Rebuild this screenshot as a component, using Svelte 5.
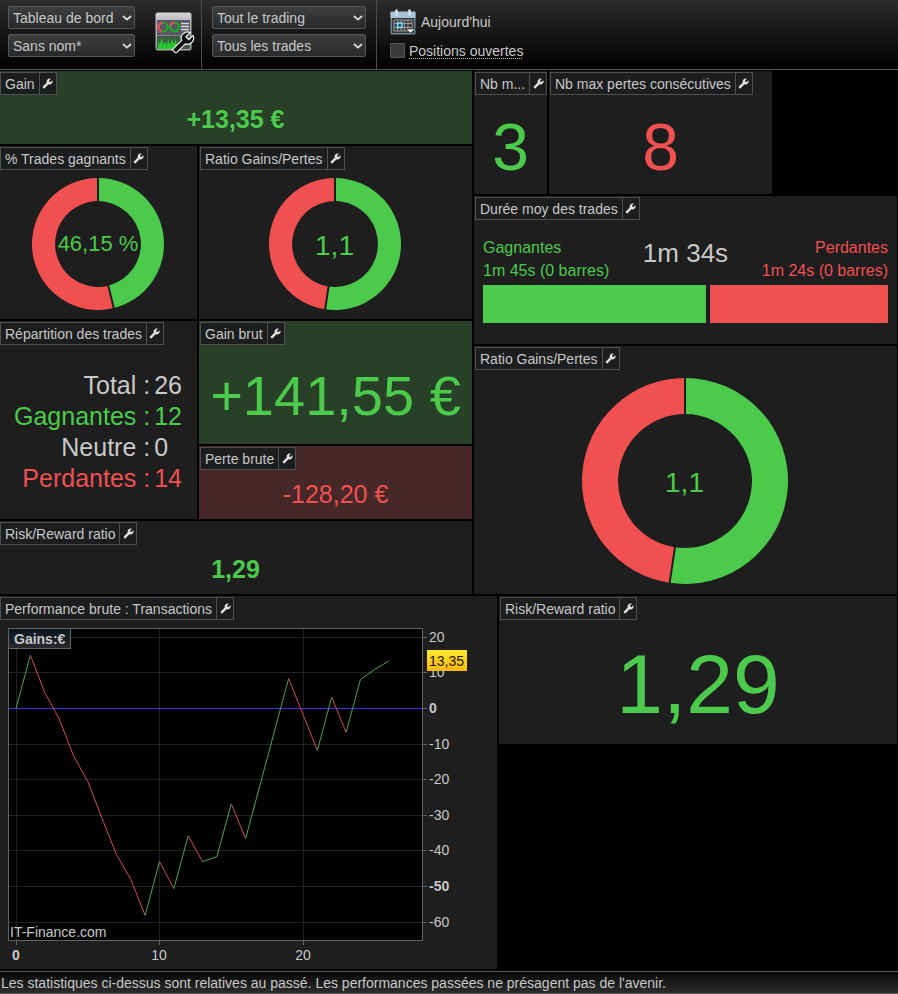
<script lang="ts">
	const X_STEP = 14.35;
	const X_ZERO = 17;
	const Y_ZERO = 88.5;
	const Y_UNIT = 3.56;

	let openPositions = $state(false);

	const trades = [
		0, 15, 4.5, -2.8, -13.2, -20.5, -30.9, -41, -48, -58.1, -43, -50.6, -35.8, -43, -41.6, -26.8,
		-36.5, -21.6, -6.5, 8.4, -1.7, -11.8, 3.2, -6.7, 8.1, 11, 13.35
	];
	const yTicks = [20, 10, 0, -10, -20, -30, -40, -50, -60];
	const xTicks = [0, 10, 20];

	const x = (i: number) => X_ZERO + i * X_STEP;
	const y = (v: number) => Y_ZERO - v * Y_UNIT;
	const gridY = (v: number) => Math.floor(y(v)) + 0.5;
	const gridX = (i: number) => Math.floor(x(i)) + 0.5;

	let segments = $derived(
		trades.slice(1).map((v, i) => ({
			x1: x(i),
			y1: y(trades[i]),
			x2: x(i + 1),
			y2: y(v),
			up: v >= trades[i]
		}))
	);

	const breakdown = [
		{ label: 'Total', value: 26, tone: '' },
		{ label: 'Gagnantes', value: 12, tone: 'win' },
		{ label: 'Neutre', value: 0, tone: '' },
		{ label: 'Perdantes', value: 14, tone: 'loss' }
	];

	const durations = { win: 105, loss: 84 };

	function polar(part: number, r: number) {
		const a = part * 2 * Math.PI;
		return `${100 + r * Math.sin(a)} ${100 - r * Math.cos(a)}`;
	}

	function slice(from: number, to: number) {
		const large = to - from > 0.5 ? 1 : 0;
		return `M${polar(from, 100)}A100 100 0 ${large} 1 ${polar(to, 100)}L${polar(to, 65)}A65 65 0 ${large} 0 ${polar(from, 65)}Z`;
	}
</script>

{#snippet wrench()}
	<svg class="wrench" viewBox="0 0 24 24" aria-hidden="true">
		<path
			transform="matrix(-1 0 0 1 24 0)"
			d="M22.7 19l-9.1-9.1c.9-2.3.4-5-1.5-6.9-2-2-5-2.4-7.4-1.3L9 6 6 9 1.6 4.7C.4 7.1.9 10.1 2.9 12.1c1.9 1.9 4.6 2.4 6.9 1.5l9.1 9.1c.4.4 1 .4 1.4 0l2.3-2.3c.5-.4.5-1.1.1-1.4z"
		/>
	</svg>
{/snippet}

{#snippet tab(title: string)}
	<header class="tab">
		<h2>{title}</h2>
		<button type="button">{@render wrench()}</button>
	</header>
{/snippet}

{#snippet dropdown(id: string, text: string)}
	<div class="dropdown">
		<select {id}>
			<option>{text}</option>
		</select>
		<svg viewBox="0 0 10 6" aria-hidden="true"><path d="M1 1l4 3.6L9 1" /></svg>
	</div>
{/snippet}

{#snippet donut(part: number, text: string, size: string)}
	<div class="donut {size}">
		<svg viewBox="0 0 200 200" aria-hidden="true">
			<path class="win" d={slice(0, part)} />
			<path class="loss" d={slice(part, 1)} />
			<path class="split" d="M{polar(0, 63)}L{polar(0, 102)}M{polar(part, 63)}L{polar(part, 102)}" />
		</svg>
		<span>{text}</span>
	</div>
{/snippet}

<div class="toolbar">
	<div class="group">
		<div class="selects">
			{@render dropdown('view', 'Tableau de bord')}
			{@render dropdown('layout', 'Sans nom*')}
		</div>
		<button class="icon-button" type="button">
			<svg class="board-icon" viewBox="0 0 40 42" aria-hidden="true">
				<defs>
					<linearGradient id="board" x1="0" y1="0" x2="0" y2="1">
						<stop offset="0" stop-color="#d4d6da" />
						<stop offset="0.25" stop-color="#b4b6ba" />
						<stop offset="1" stop-color="#a4a6aa" />
					</linearGradient>
				</defs>
				<rect x="0.5" y="0.5" width="36" height="38" rx="2.5" fill="url(#board)" />
				<rect x="2" y="8" width="33" height="29" fill="#5a5668" />
				<rect x="2" y="23" width="33" height="14" fill="#3c5a46" />
				<circle cx="8" cy="15" r="4.4" fill="none" stroke="#18b020" stroke-width="2.2" />
				<path d="M8 10.6a4.4 4.4 0 0 0-1 8.7" fill="none" stroke="#f04858" stroke-width="2.2" />
				<circle cx="19.5" cy="15" r="4.4" fill="none" stroke="#18b020" stroke-width="2.2" />
				<path d="M19.5 10.6a4.4 4.4 0 0 0-4.2 3.2" fill="none" stroke="#f04858" stroke-width="2.2" />
				<path d="M26 11.5h8M26 14.5h8M26 17.5h8" stroke="#d8d8dc" stroke-width="1.5" />
				<path d="M2 23.5h24" stroke="#85858c" />
				<path
					d="M3 37v-7l2 2 2-7 1 8 2-4 2 5 1-8 2 7 2-6 2 5 2-6 1 11z"
					fill="#25c72c"
				/>
				<path
					transform="translate(39.5 19) scale(-.95 .95)"
					d="M22.7 19l-9.1-9.1c.9-2.3.4-5-1.5-6.9-2-2-5-2.4-7.4-1.3L9 6 6 9 1.6 4.7C.4 7.1.9 10.1 2.9 12.1c1.9 1.9 4.6 2.4 6.9 1.5l9.1 9.1c.4.4 1 .4 1.4 0l2.3-2.3c.5-.4.5-1.1.1-1.4z"
					fill="#0c0c0e"
					stroke="#f0f0f0"
					stroke-width="1.3"
				/>
			</svg>
		</button>
	</div>
	<div class="group wide">
		<div class="selects">
			{@render dropdown('account', 'Tout le trading')}
			{@render dropdown('filter', 'Tous les trades')}
		</div>
	</div>
	<div class="period">
		<button class="date-button" type="button">
			<svg viewBox="0 0 26 26" aria-hidden="true">
				<rect x="0.5" y="3" width="25" height="22.5" rx="1" fill="#75838f" />
				<rect x="0.5" y="2.5" width="25" height="6.5" rx="1" fill="#a9c2d8" />
				<rect x="2" y="9" width="22" height="15" fill="#343a42" />
				<path
					d="M4 11h18v11H4zM4 14.5h18M4 18.5h18M7.5 11v11M11 11v11M14.5 11v11M18 11v11"
					fill="none"
					stroke="#a49a94"
				/>
				<rect x="7.5" y="14" width="4.5" height="4.5" fill="#205870" stroke="#7fe4f4" stroke-width="1.5" />
				<path d="M6.5 1.5v4M19.5 1.5v4" stroke="#dce6ee" stroke-width="2.4" stroke-linecap="round" />
				<path d="M16 20h9l-4.5 4z" fill="#fff" stroke="#222" stroke-width="0.6" />
			</svg>
			Aujourd'hui
		</button>
		<div class="check">
			<input id="open-positions" type="checkbox" bind:checked={openPositions} />
			<label for="open-positions">Positions ouvertes</label>
		</div>
	</div>
</div>

<main>
	<section class="panel gain positive">
		{@render tab('Gain')}
		<p class="value bold win">+13,35 €</p>
	</section>

	<section class="panel max-wins">
		{@render tab('Nb m...')}
		<p class="value digit win">3</p>
	</section>

	<section class="panel max-losses">
		{@render tab('Nb max pertes consécutives')}
		<p class="value digit loss">8</p>
	</section>

	<section class="panel winners">
		{@render tab('% Trades gagnants')}
		{@render donut(12 / 26, '46,15 %', 'percent')}
	</section>

	<section class="panel ratio">
		{@render tab('Ratio Gains/Pertes')}
		{@render donut(1.1 / 2.1, '1,1', '')}
	</section>

	<section class="panel duration">
		{@render tab('Durée moy des trades')}
		<div class="duration-body">
			<div class="duration-text">
				<p class="win">Gagnantes<br />1m 45s (0 barres)</p>
				<strong>1m 34s</strong>
				<p class="loss">Perdantes<br />1m 24s (0 barres)</p>
			</div>
			<div class="bars">
				<div class="bar win" style="flex-grow:{durations.win}"></div>
				<div class="bar loss" style="flex-grow:{durations.loss}"></div>
			</div>
		</div>
	</section>

	<section class="panel breakdown">
		{@render tab('Répartition des trades')}
		<div class="value">
			<table>
				<tbody>
					{#each breakdown as row (row.label)}
						<tr class={row.tone}>
							<th scope="row">{row.label} :</th>
							<td>{row.value}</td>
						</tr>
					{/each}
				</tbody>
			</table>
		</div>
	</section>

	<section class="panel gross-gain positive">
		{@render tab('Gain brut')}
		<p class="value large win">+141,55 €</p>
	</section>

	<section class="panel gross-loss negative">
		{@render tab('Perte brute')}
		<p class="value loss">-128,20 €</p>
	</section>

	<section class="panel ratio-big">
		{@render tab('Ratio Gains/Pertes')}
		{@render donut(1.1 / 2.1, '1,1', 'big')}
	</section>

	<section class="panel risk">
		{@render tab('Risk/Reward ratio')}
		<p class="value bold win">1,29</p>
	</section>

	<section class="panel performance">
		{@render tab('Performance brute : Transactions')}
		<svg class="chart" viewBox="0 0 498 349" role="img" aria-label="Performance brute">
			<defs>
				<linearGradient id="caption" x1="0" y1="0" x2="0" y2="1">
					<stop offset="0" stop-color="#08131e" />
					<stop offset="1" stop-color="#2a2a2c" />
				</linearGradient>
				<linearGradient id="price" x1="0" y1="0" x2="0" y2="1">
					<stop offset="0" stop-color="#ffe830" />
					<stop offset="1" stop-color="#fcb80c" />
				</linearGradient>
			</defs>
			<rect x="9.5" y="8.5" width="414" height="312" fill="#000" stroke="#646464" />
			{#each yTicks as tick (tick)}
				<path class="grid" d="M10 {gridY(tick)}H423" />
				<path class="tick" d="M424 {gridY(tick)}h4" />
				<text class:bold={tick % 50 === 0} x="430" y={Math.floor(y(tick)) + 5}>{tick}</text>
			{/each}
			{#each xTicks as tick (tick)}
				<path class="grid" d="M{gridX(tick)} 9V320" />
				<path class="tick" d="M{gridX(tick)} 321v4" />
				<text class="middle" class:bold={tick === 0} x={Math.floor(x(tick))} y="340">{tick}</text>
			{/each}
			<path class="zero" d="M10 {gridY(0)}H423" />
			{#each segments as s, i (i)}
				<line class={s.up ? 'up' : 'down'} x1={s.x1} y1={s.y1} x2={s.x2} y2={s.y2} />
			{/each}
			<rect x="9.5" y="8.5" width="62" height="20" fill="url(#caption)" stroke="#646464" />
			<text class="bold" x="15" y="24">Gains:€</text>
			<text x="11" y="317">IT-Finance.com</text>
			<rect x="428" y="30" width="40" height="21" fill="url(#price)" />
			<text class="price" x="430" y="46">13,35</text>
		</svg>
	</section>

	<section class="panel risk-big">
		{@render tab('Risk/Reward ratio')}
		<p class="value huge win">1,29</p>
	</section>
</main>

<footer>
	Les statistiques ci-dessus sont relatives au passé. Les performances passées ne présagent pas de
	l'avenir.
</footer>

<style>
	:global(body) {
		background: #000;
		color: #c8c8c8;
		font: 14px/20px 'Liberation Sans', Arial, sans-serif;
	}
	button,
	select {
		color: inherit;
		font: inherit;
		padding: 0;
		margin: 0;
		border: 0;
		background: none;
	}
	p,
	h2 {
		margin: 0;
		font-weight: normal;
	}
	.win {
		color: #4bca4b;
		fill: #4bca4b;
	}
	.loss {
		color: #f05050;
		fill: #f05050;
	}

	.toolbar {
		display: flex;
		height: 69px;
		border-bottom: 1px solid #5a5a5a;
		margin-bottom: 1px;
		background: linear-gradient(#2c2c2c, #000);
	}
	.group {
		display: flex;
		gap: 20px;
		box-sizing: border-box;
		width: 202px;
		padding: 6px 0 0 8px;
		border-right: 1px solid #4c4c4c;
	}
	.group.wide {
		width: 175px;
		padding: 6px 10px 0;
	}
	.selects {
		display: flex;
		flex-direction: column;
		flex: 0 0 127px;
		gap: 5px;
	}
	.wide .selects {
		flex: 1;
	}
	.dropdown {
		display: grid;
		align-items: center;
		grid-template-columns: 1fr 13px;
	}
	.dropdown select {
		grid-area: 1 / 1 / 2 / 3;
		appearance: none;
		height: 23px;
		padding: 0 4px;
		border: 1px solid #555759;
		border-radius: 2px;
		background: linear-gradient(#3c3e40, #28292b);
	}
	.dropdown svg {
		grid-area: 1 / 2;
		width: 10px;
		height: 6px;
		fill: none;
		stroke: #dcdcdc;
		stroke-width: 1.8;
		pointer-events: none;
	}
	.icon-button {
		align-self: flex-start;
		padding-top: 6px;
	}
	.board-icon {
		display: block;
		width: 40px;
		height: 42px;
	}
	.period {
		padding: 9px 0 0 13px;
	}
	.date-button {
		display: flex;
		align-items: center;
		gap: 5px;
	}
	.date-button svg {
		width: 26px;
		height: 26px;
	}
	.check {
		display: flex;
		align-items: flex-start;
		gap: 4px;
		margin-top: 8px;
	}
	.check input {
		appearance: none;
		width: 15px;
		height: 15px;
		margin: 0;
		border: 1px solid #58585a;
		border-radius: 1px;
		background: #3a3a3c;
	}
	.check input:checked {
		background: #4bca4b;
	}
	.check label {
		line-height: 16px;
		text-decoration: underline dotted 1px;
		text-underline-offset: 2px;
		text-decoration-skip-ink: none;
	}

	/* 36 x 36 modules, bleeding one pixel to the left */
	main {
		display: grid;
		gap: 2px;
		grid-template-columns: repeat(36, minmax(0, 1fr));
		grid-template-rows: repeat(36, minmax(23px, auto));
		margin: 0 1px 2px -1px;
	}
	.panel {
		display: flex;
		flex-direction: column;
		background: #1e1e1e;
	}
	.positive {
		background: #283f28;
	}
	.negative {
		background: #462829;
	}
	.gain {
		grid-area: 1 / 1 / span 3 / span 19;
	}
	.max-wins {
		grid-area: 1 / 20 / span 5 / span 3;
	}
	.max-losses {
		grid-area: 1 / 23 / span 5 / span 9;
	}
	.winners {
		grid-area: 4 / 1 / span 7 / span 8;
	}
	.ratio {
		grid-area: 4 / 9 / span 7 / span 11;
	}
	.duration {
		grid-area: 6 / 20 / span 6 / span 17;
	}
	.breakdown {
		grid-area: 11 / 1 / span 8 / span 8;
	}
	.gross-gain {
		grid-area: 11 / 9 / span 5 / span 11;
	}
	.ratio-big {
		grid-area: 12 / 20 / span 10 / span 17;
	}
	.gross-loss {
		grid-area: 16 / 9 / span 3 / span 11;
	}
	.risk {
		grid-area: 19 / 1 / span 3 / span 19;
	}
	.performance {
		grid-area: 22 / 1 / span 15 / span 20;
	}
	.risk-big {
		grid-area: 22 / 21 / span 6 / span 16;
	}

	.tab {
		display: flex;
		align-self: flex-start;
		box-sizing: border-box;
		height: 23px;
		margin: 1px 0 0 1px;
		border: 1px solid #505050;
		background: #1c1d1f;
	}
	.tab h2 {
		padding: 0 4px;
		font-size: 14px;
		line-height: 22px;
		white-space: nowrap;
	}
	.tab button {
		display: grid;
		place-items: center;
		width: 17px;
		border-left: 1px solid #505050;
	}
	.wrench {
		width: 11px;
		height: 11px;
		fill: #e0e0e0;
	}

	.value {
		display: grid;
		flex: 1;
		place-content: center;
		font-size: 25px;
		line-height: 31px;
		white-space: nowrap;
	}
	.bold {
		font-weight: bold;
	}
	.digit {
		padding-top: 4px;
		font-size: 66px;
		line-height: 64px;
	}
	.large {
		padding-top: 2px;
		font-size: 56px;
		line-height: 56px;
	}
	.huge {
		padding-top: 4px;
		font-size: 84px;
		line-height: 84px;
	}

	.donut {
		display: grid;
		flex: 1;
		place-items: center;
		place-content: center;
		padding: 0 2px 2px 0;
		color: #4bca4b;
		font-size: 28px;
	}
	.donut.percent {
		padding-right: 0;
		font-size: 22px;
	}
	.donut > * {
		grid-area: 1 / 1;
	}
	.donut span {
		padding-top: 4px;
	}
	.donut.percent span {
		padding-top: 0;
	}
	.donut svg {
		height: 132px;
	}
	.donut.big svg {
		height: 206px;
	}
	.split {
		stroke: #1e1e1e;
		stroke-width: 2px;
		vector-effect: non-scaling-stroke;
	}

	.duration-body {
		padding: 16px 9px;
	}
	.duration-text {
		display: grid;
		grid-template-columns: 1fr auto 1fr;
		margin-bottom: 3px;
		font-size: 16px;
		line-height: 23px;
	}
	.duration-text .loss {
		text-align: right;
	}
	.duration-text strong {
		font-size: 26px;
		font-weight: normal;
		line-height: 34px;
	}
	.bars {
		display: flex;
		gap: 4px;
	}
	.bar {
		height: 38px;
		background: currentColor;
	}

	table {
		border-collapse: collapse;
	}
	th,
	td {
		padding: 0;
		font-weight: normal;
	}
	th {
		text-align: right;
	}
	td {
		padding-left: 4px;
		text-align: left;
	}

	.chart {
		display: block;
		width: 100%;
	}
	.chart text {
		fill: #c8c8c8;
	}
	.chart .middle {
		text-anchor: middle;
	}
	.chart .price {
		fill: #1c1400;
	}
	.grid {
		stroke: #222;
	}
	.tick {
		stroke: #646464;
	}
	.zero {
		stroke: #3c34c8;
	}
	.up {
		stroke: #46a850;
	}
	.down {
		stroke: #d44c4c;
	}

	footer {
		padding: 1px 1px 0;
		border-top: 1px solid #5a5a5a;
		border-bottom: 1px solid #5a5a5a;
		background: linear-gradient(#080808, #2c2c2c);
	}
</style>
